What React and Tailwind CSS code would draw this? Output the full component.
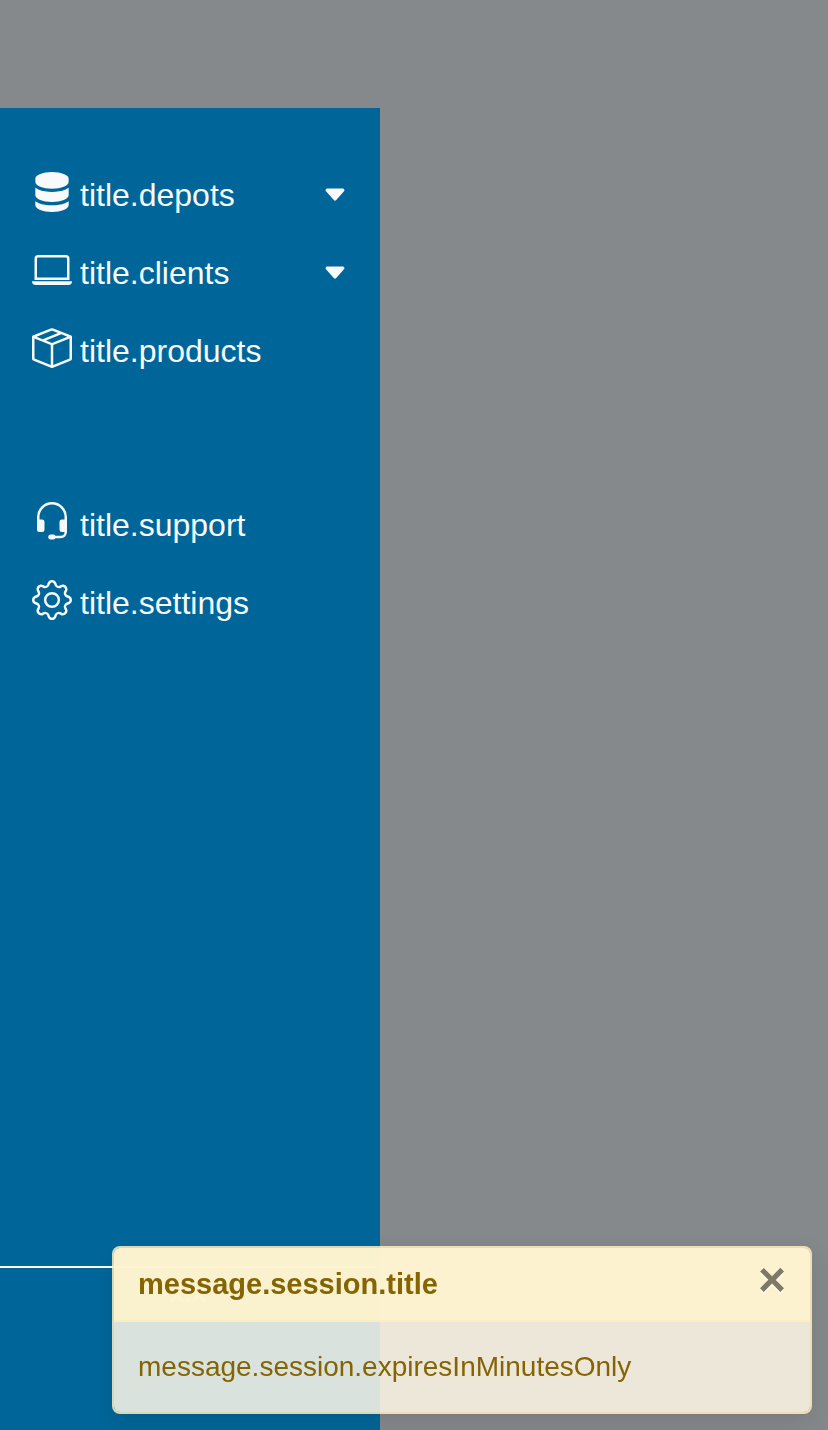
import { BsServer, BsLaptop, BsBoxSeam, BsHeadset, BsGear, BsCaretDownFill } from "react-icons/bs";

const mainItems = [
  { label: "title.depots", Icon: BsServer, menu: true },
  { label: "title.clients", Icon: BsLaptop, menu: true },
  { label: "title.products", Icon: BsBoxSeam },
];

const helpItems = [
  { label: "title.support", Icon: BsHeadset },
  { label: "title.settings", Icon: BsGear },
];

function NavItem({ label, Icon, menu }) {
  const content = (
    <>
      <Icon className="size-10 shrink-0" aria-hidden="true" />
      <span className="mt-1.5 grow text-left">{label}</span>
      {menu && <BsCaretDownFill className="mt-1.5 size-[26px] shrink-0" aria-hidden="true" />}
    </>
  );
  const style = "flex h-[78px] w-full items-center gap-2 px-8";
  return (
    <li>
      {menu ? (
        <button type="button" aria-expanded="false" className={style}>{content}</button>
      ) : (
        <a href="#" className={style}>{content}</a>
      )}
    </li>
  );
}

function Toast() {
  return (
    <div
      role="alert"
      className="fixed right-4 bottom-4 left-28 rounded-lg border-2 border-[#ffeeba]/85 bg-[#fff8e8]/85 bg-clip-padding text-[28px] leading-[42px] text-[#856404] shadow-[0_8px_24px_rgba(0,0,0,0.1)]"
    >
      <div className="flex h-[74px] items-center justify-between rounded-t-md border-b-2 border-[#ffeeba]/85 bg-[#fff3cd]/85 bg-clip-padding px-6">
        <strong className="text-[29px] font-bold">message.session.title</strong>
        <button
          type="button"
          aria-label="Close"
          className="mb-2 text-5xl leading-none font-bold text-black opacity-50 [text-shadow:0_2px_0_#fff]"
        >
          ×
        </button>
      </div>
      <div className="p-6">message.session.expiresInMinutesOnly</div>
    </div>
  );
}

export default function App() {
  return (
    <div className="flex min-h-screen flex-col bg-[#85898b] pt-27 font-['Liberation_Sans',Arial,sans-serif]">
      <aside className="flex w-[380px] grow flex-col bg-[#006699] text-[32px] leading-[48px] text-[#f8f9fa]">
        <nav className="grow pt-[45px]">
          <ul>{mainItems.map((item) => <NavItem key={item.label} {...item} />)}</ul>
          <ul className="mt-24">{helpItems.map((item) => <NavItem key={item.label} {...item} />)}</ul>
        </nav>
        <footer className="mr-1 h-[164px] border-t-2 border-white pt-1 text-center text-[28px] leading-[42px]">
          x.x
        </footer>
      </aside>
      <Toast />
    </div>
  );
}
